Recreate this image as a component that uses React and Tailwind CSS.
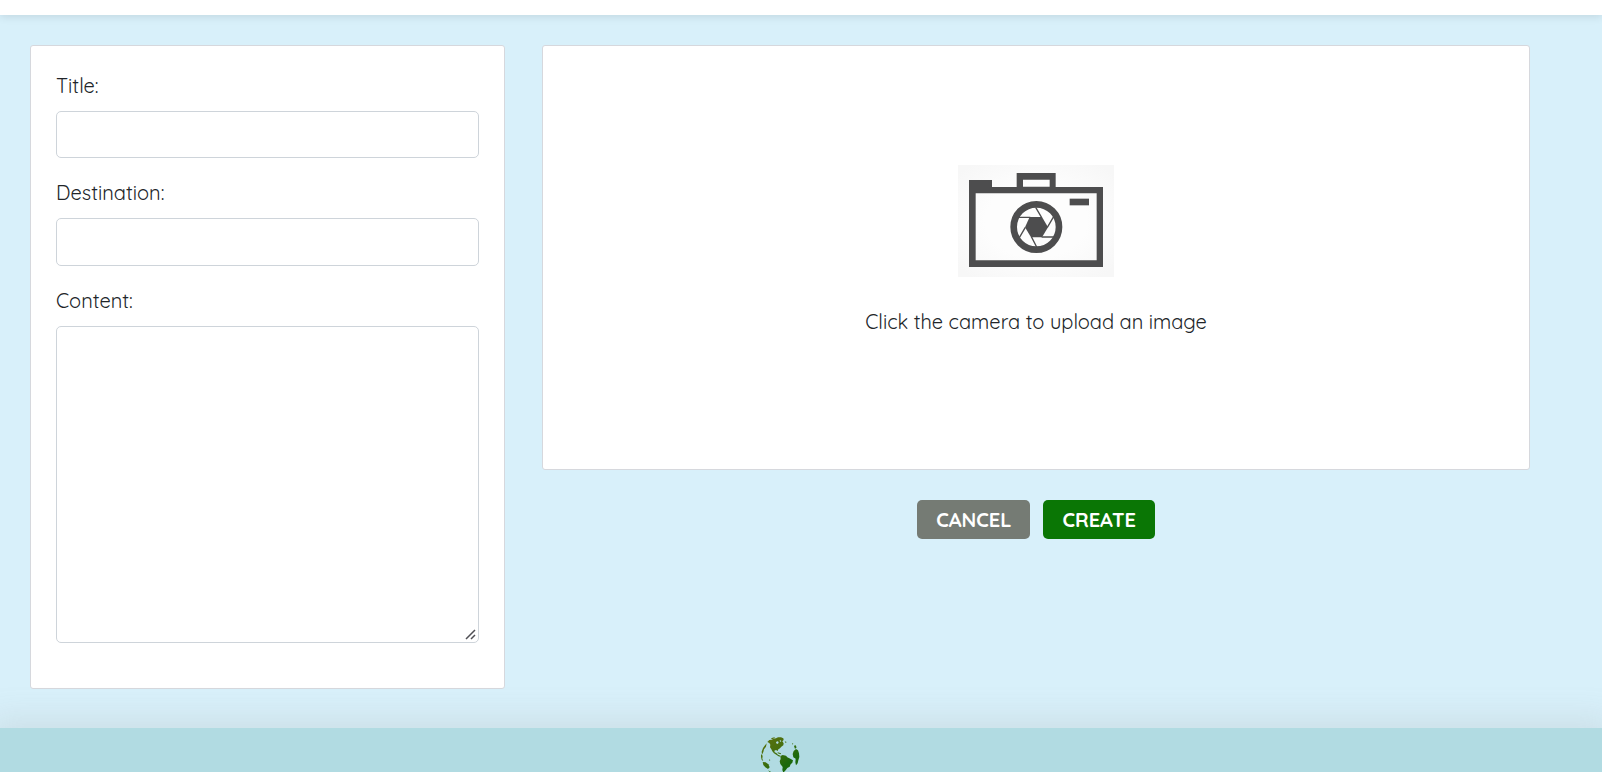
import React from "react";

function CameraPicture() {
  return (
    <svg viewBox="54 45 468 336" className="block h-28 w-[156px]" aria-hidden="true">
      <defs>
        <radialGradient id="paper" cx="50%" cy="50%" r="65%">
          <stop offset="0.5" stopColor="#fdfdfd" />
          <stop offset="1" stopColor="#f7f7f7" />
        </radialGradient>
      </defs>
      <rect x="54" y="45" width="468" height="336" fill="url(#paper)" />
      <path
        fill="#4d4d4e"
        fillRule="evenodd"
        d="M87 90H156V111H230V69H347V111H489V351H87ZM107 130V331H470V130ZM249 89V110H329V89Z"
      />
      <rect x="389" y="146" width="58" height="20" fill="#4d4d4e" />
      <circle cx="289" cy="231" r="68" fill="#fdfdfd" stroke="#4d4d4e" strokeWidth="20" />
      <path d="M269 201H306L324 232L306 262H273L255 232Z" fill="#4d4d4e" />
      <path
        d="M305 203L287 172M322 232L341 200M305 261H341M274 260L290 291M256 232L238 263M271 202H235"
        stroke="#4d4d4e"
        strokeWidth="4"
        fill="none"
      />
    </svg>
  );
}

function Globe() {
  return (
    <svg viewBox="63 53 117 117" className="block size-[39px]" role="img" aria-label="Globe">
      <defs>
        <linearGradient id="land" x1="90" y1="60" x2="145" y2="130" gradientUnits="userSpaceOnUse">
          <stop offset="0" stopColor="#56700f" />
          <stop offset="0.45" stopColor="#456f0d" />
          <stop offset="1" stopColor="#1b690c" />
        </linearGradient>
      </defs>
      <g fill="url(#land)">
        <path
          fillRule="evenodd"
          d="M82 68L88 62L95 61L101 58L108 57L114 54L123 54L130 57L131 62L127 66L131 72L130 78L124 82L120 87L115 90L113 95L108 92L103 94L104 99L109 101L114 106L121 109L118 112L110 107L102 102L97 96L94 90L90 84L91 76L88 71ZM109 67L108 71L112 74L115 72L116 68L113 66ZM120 62L119 65L122 68L124 65Z"
        />
        <path d="M93 57L103 54L105 56L96 60Z" />
        <path d="M113 99L123 102L122 105L113 102Z" />
        <path d="M121 110L128 107L138 109L142 114L151 118L159 123L157 130L152 135L149 142L142 146L137 153L130 160L127 152L128 143L121 134L119 126L122 119Z" />
        <path d="M162 80L166 77L170 84L165 89ZM161 95L168 89L174 93L177 102L178 113L175 123L173 132L168 138L166 129L167 118L160 114L158 104Z" />
        <path d="M68 128L77 129L85 135L89 144L84 149L76 144L70 137Z" />
        <path d="M75 78L80 72L78 82L72 90L70 98L66 106L65 97L69 86ZM63 104L68 109L67 118L70 126L65 121L63 113Z" />
        <path d="M134 66L140 68L137 71ZM87 120L91 122L89 125ZM84 153L92 157L99 163L91 160ZM156 71L160 73L158 76Z" />
      </g>
    </svg>
  );
}

const card = "rounded-[3px] border border-[#d6d8dd] bg-white";
const field = "block w-full rounded-[5px] border border-[#ced4da] bg-white px-3 text-xl outline-none focus:border-sky-400";
const label = "mb-[10px] block text-xl leading-[30px] font-normal";
const action = "h-[39px] cursor-pointer rounded-[5px] px-[19px] text-xl leading-[30px] font-bold text-white uppercase";

export default function App() {
  return (
    <div className="flex min-h-screen flex-col bg-[#d8f0fa] font-['Quicksand','Lato',sans-serif] text-[#212529]">
      <header className="relative h-[15px] bg-white shadow-[0_2px_8px_rgba(0,0,0,0.1)]" />

      <main className="grid flex-1 grid-cols-[475fr_988fr] items-start gap-[37px] pt-[30px] pr-[72px] pb-[39px] pl-[30px]">
        <form id="post" className={`${card} px-[25px] pt-[25px] pb-[45px]`} onSubmit={(e) => e.preventDefault()}>
          <div className="mb-5">
            <label htmlFor="title" className={label}>Title:</label>
            <input id="title" type="text" className={`${field} h-[47px]`} />
          </div>
          <div className="mb-5">
            <label htmlFor="destination" className={label}>Destination:</label>
            <input id="destination" type="text" className={`${field} h-12`} />
          </div>
          <div>
            <label htmlFor="content" className={label}>Content:</label>
            <div className="relative">
              <textarea id="content" className={`${field} h-[317px] resize-y py-2 [&::-webkit-resizer]:bg-transparent`} />
              <svg viewBox="0 0 12 12" className="pointer-events-none absolute right-[2px] bottom-[2px] size-3" aria-hidden="true">
                <path d="M1 10L10 1M6 10L10 6" stroke="#505055" strokeWidth="1.5" fill="none" />
              </svg>
            </div>
          </div>
        </form>

        <section>
          <div className={`${card} flex flex-col items-center pt-[119px] pb-[132px]`}>
            <button type="button" aria-label="Upload an image" className="cursor-pointer">
              <CameraPicture />
            </button>
            <p className="mt-[30px] text-xl leading-[30px] font-normal">Click the camera to upload an image</p>
          </div>
          <div className="mt-[30px] flex justify-center gap-[13px]">
            <button type="button" className={`${action} bg-[#757b74]`}>Cancel</button>
            <button type="submit" form="post" className={`${action} bg-[#0a7605]`}>Create</button>
          </div>
        </section>
      </main>

      <footer className="relative flex h-11 justify-center overflow-hidden bg-[#b1dbe2] pt-[9px] pr-[42px] shadow-[0_0_32px_10px_rgba(150,150,150,0.18)]">
        <Globe />
      </footer>
    </div>
  );
}
